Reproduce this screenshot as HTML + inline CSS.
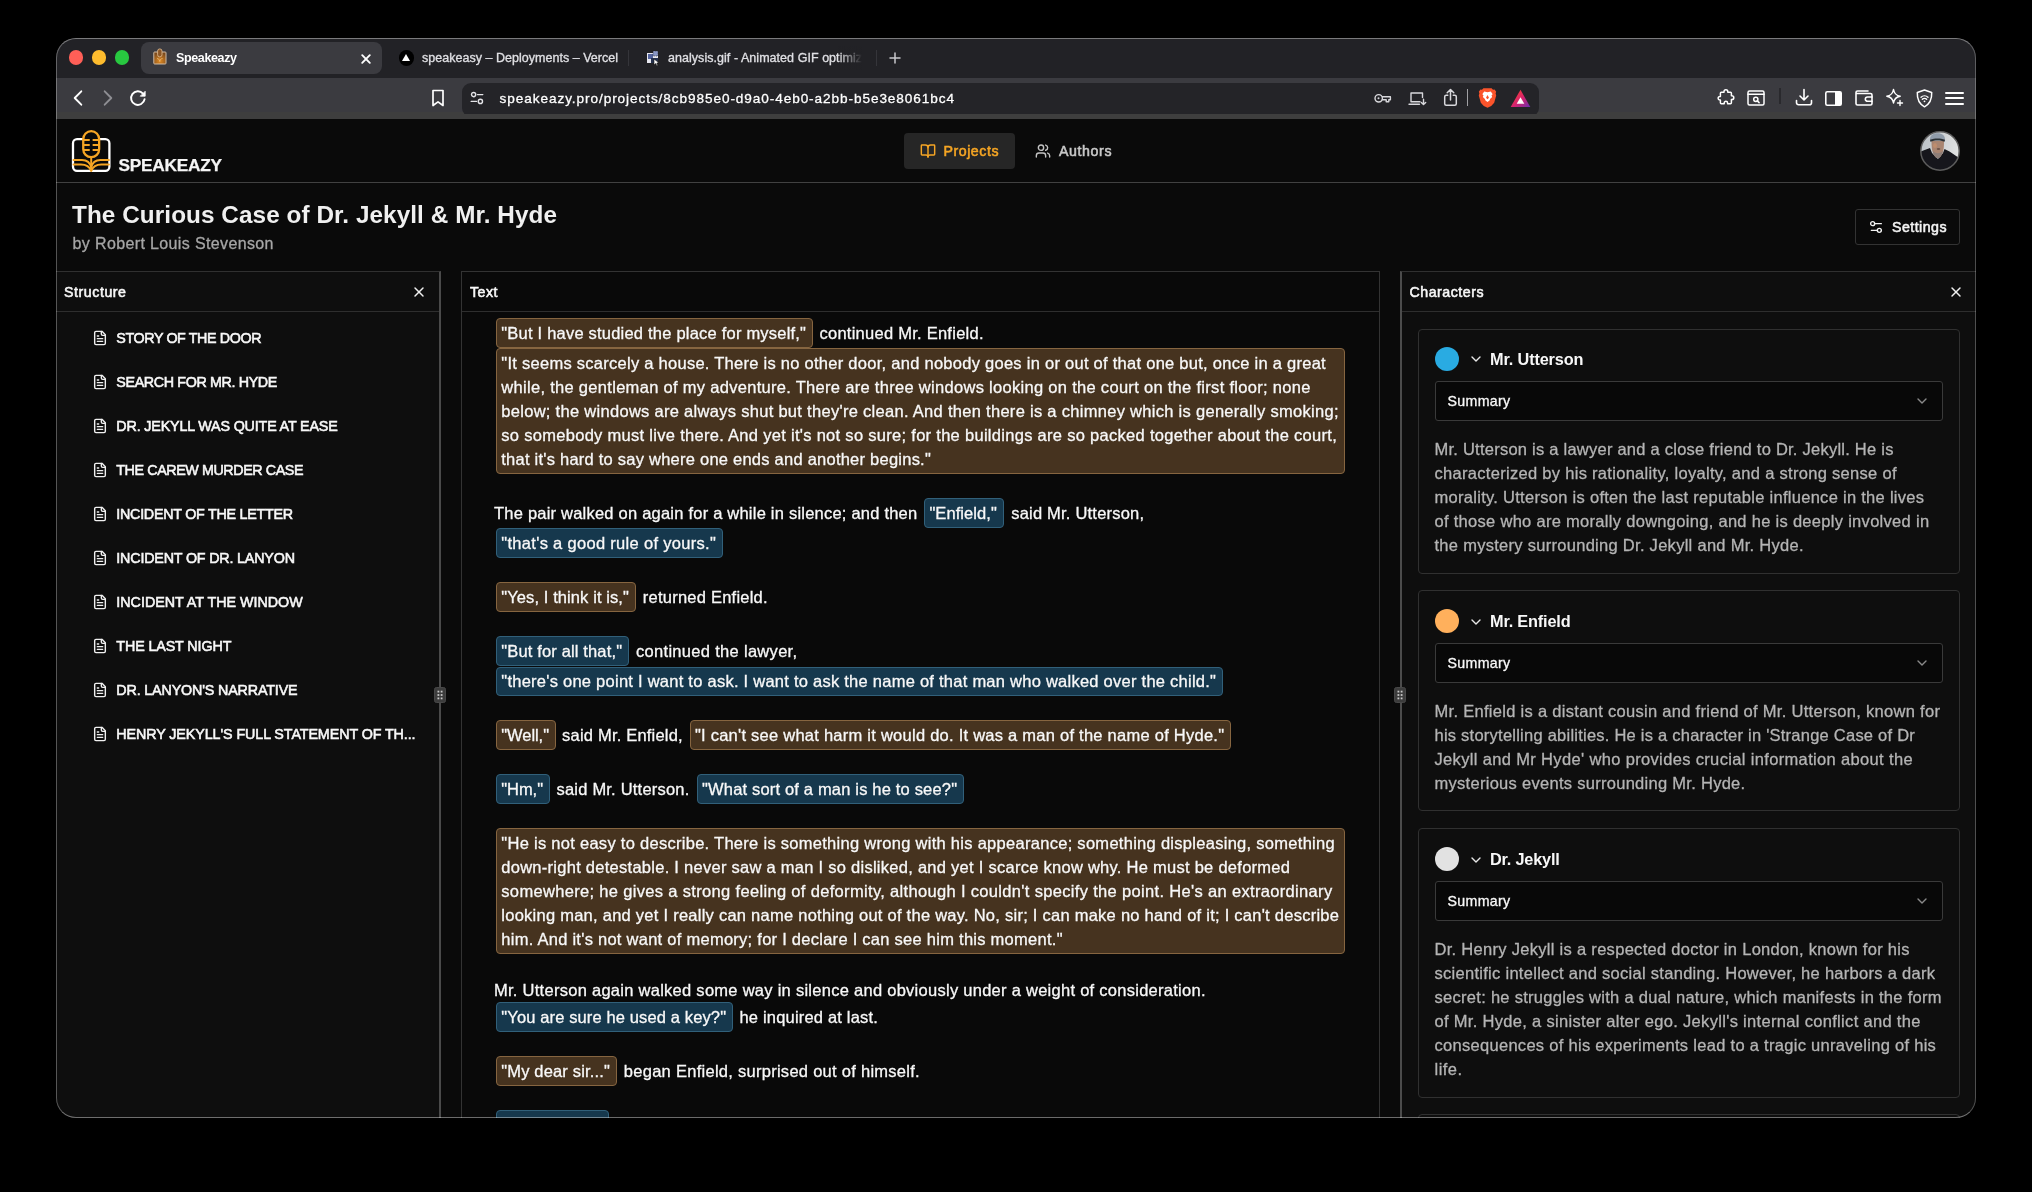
<!DOCTYPE html>
<html><head><meta charset="utf-8"><title>Speakeazy</title>
<style>
*{box-sizing:border-box;margin:0;padding:0}
html,body{width:2032px;height:1192px;overflow:hidden;background:#000;font-family:"Liberation Sans",sans-serif}
.a{position:absolute}
.t{position:absolute;white-space:pre}
#win{position:absolute;left:56px;top:38px;width:1920px;height:1080px;border-radius:20px;overflow:hidden;background:#0a0a0a}
#in{position:absolute;left:-56px;top:-38px;width:2032px;height:1192px}
#tx{position:absolute;left:0;top:0;width:2032px;height:1192px;will-change:transform}
#winb{position:absolute;left:56px;top:38px;width:1920px;height:1080px;border-radius:20px;border:1px solid;border-color:rgba(255,255,255,.4) rgba(255,255,255,.27) rgba(255,255,255,.4) rgba(255,255,255,.3);pointer-events:none}
.hb{position:absolute;border:1px solid;border-radius:4px}
.br{background:#46331f;border-color:#866540}
.bl{background:#16384d;border-color:#31607a}
svg{position:absolute;overflow:visible}
.ic{fill:none;stroke-linecap:round;stroke-linejoin:round}
.pnl{position:absolute;background:#0e0e0e}
.ln{position:absolute;background:#2e2e2e}
.card{position:absolute;left:1417.5px;width:542.5px;border:1px solid #303030;border-radius:4px;background:#0e0e0e}
.sel{position:absolute;left:1435px;width:508px;height:40px;border:1px solid #3a3a3a;border-radius:3px;background:#080808}
.dot{position:absolute;left:1435px;width:24px;height:24px;border-radius:50%}
</style></head><body>
<div id="win"><div id="in">
<!-- tab bar -->
<div class="a" style="left:56px;top:38px;width:1920px;height:40px;background:#222226"></div>
<div class="a" style="left:56px;top:78px;width:1920px;height:35px;background:#3b3b40"></div>
<!-- traffic lights -->
<div class="a" style="left:68.6px;top:50.2px;width:14.8px;height:14.8px;border-radius:50%;background:#ff5f57"></div>
<div class="a" style="left:91.6px;top:50.2px;width:14.8px;height:14.8px;border-radius:50%;background:#febc2e"></div>
<div class="a" style="left:114.6px;top:50.2px;width:14.8px;height:14.8px;border-radius:50%;background:#28c840"></div>
<!-- active tab -->
<div class="a" style="left:140.5px;top:42px;width:241.5px;height:32px;border-radius:8px;background:#3b3b40"></div>
<!-- favicon speakeazy -->
<svg style="left:153px;top:48px" width="14" height="17" viewBox="0 0 14 17"><defs><radialGradient id="fav" cx=".5" cy=".75" r=".7"><stop offset="0" stop-color="#e08a22"/><stop offset="1" stop-color="#7a4a1e"/></radialGradient></defs><rect x=".8" y="4" width="12.200" height="12" rx=".8" fill="url(#fav)" stroke="#dcc8b2" stroke-width=".9"/><rect x="4.600" y=".9" width="4.400" height="8" rx="2.200" fill="#8a5524" stroke="#d9b48a" stroke-width=".9"/><path d="M4 10.500c1.500 0 2.500 1 2.800 3 .3-2 1.300-3 2.800-3" fill="none" stroke="#f0c890" stroke-width=".8" opacity=".8"/></svg>
<!-- tab close -->
<svg class="ic" style="left:361px;top:53.5px" width="10" height="10" viewBox="0 0 10 10" stroke="#fff" stroke-width="1.9"><path d="M1.2 1.2 8.8 8.8M8.8 1.2 1.2 8.8"/></svg>
<!-- vercel favicon -->
<div class="a" style="left:398.5px;top:50px;width:15.5px;height:15.5px;border-radius:50%;background:#000"></div>
<svg style="left:402.2px;top:53.8px" width="8" height="7" viewBox="0 0 8 7"><path d="M4 0 8 7H0Z" fill="#fff"/></svg>
<div class="a" style="left:628px;top:50px;width:1px;height:16px;background:#35353a"></div>
<!-- gif favicon -->
<svg style="left:645px;top:49px" width="16" height="17" viewBox="0 0 16 17"><rect x="2" y="4" width="11" height="10" fill="#e8e8f0"/><rect x="3" y="5" width="5" height="5" fill="#52629c"/><rect x="8" y="2" width="5" height="5" fill="#8896c4" stroke="#222" stroke-width=".6" stroke-dasharray="1.2 1"/><rect x="6" y="9" width="7" height="5" fill="#26324f"/><path d="M9 10v6l1.7-1.5 1.2 2.2 1-.5-1.1-2.2 2.2-.2Z" fill="#fff" stroke="#111" stroke-width=".6"/></svg>
<div class="a" style="left:876px;top:50px;width:1px;height:16px;background:#35353a"></div>
<svg class="ic" style="left:889px;top:52px" width="12" height="12" viewBox="0 0 12 12" stroke="#c8c8cc" stroke-width="1.5"><path d="M6 1v10M1 6h10"/></svg>
<!-- nav icons -->
<svg class="ic" style="left:72px;top:89px" width="12" height="18" viewBox="0 0 12 18" stroke="#fff" stroke-width="1.9"><path d="M9.300 2.300 2.700 9l6.600 6.700"/></svg>
<svg class="ic" style="left:102px;top:89px" width="12" height="18" viewBox="0 0 12 18" stroke="#8e8e93" stroke-width="1.9"><path d="M2.700 2.300 9.300 9l-6.600 6.700"/></svg>
<svg class="ic" style="left:128px;top:88px" width="20" height="20" viewBox="0 0 20 20" stroke="#fff" stroke-width="1.9"><path d="M16.600 11.200a6.800 6.800 0 1 1-1.600-5.600"/><path d="M17.200 3.600v4.600h-4.600Z" fill="#fff" stroke-width=".8"/></svg>
<!-- bookmark -->
<svg class="ic" style="left:431px;top:89px" width="14" height="18" viewBox="0 0 14 18" stroke="#fff" stroke-width="1.7"><path d="M2 1.5h10v15l-5-3.6-5 3.6Z"/></svg>
<!-- url bar -->
<div class="a" style="left:56px;top:112.4px;width:1920px;height:6.6px;background:#3e3e3e"></div>
<div class="a" style="left:462px;top:82.7px;width:1077px;height:34px;border-radius:9px;background:#242428"></div>
<div class="a" style="left:56px;top:113.8px;width:1920px;height:5.2px;background:#3e3e3e"></div>
<svg class="ic" style="left:470px;top:91px" width="14" height="14" viewBox="0 0 14 14" stroke="#e4e4e8" stroke-width="1.4"><circle cx="3.6" cy="3.6" r="2.1"/><path d="M7.5 3.6h5.3"/><circle cx="10.4" cy="10.4" r="2.1"/><path d="M1.2 10.4h5.3"/></svg>
<!-- url right icons -->
<svg class="ic" style="left:1374px;top:92px" width="18" height="13" viewBox="0 0 18 13" stroke="#d8d8dc" stroke-width="1.4"><circle cx="4.7" cy="6.3" r="3.7"/><circle cx="4.5" cy="6.3" r="1" fill="#d8d8dc" stroke="none"/><path d="M8.4 4.8h8v3h-1.6v2h-2.6v-2H8.4"/></svg>
<svg class="ic" style="left:1408px;top:91px" width="19" height="15" viewBox="0 0 19 15" stroke="#d8d8dc" stroke-width="1.4"><path d="M12 10.8H3V2h11.5v4.5"/><path d="M1 13.3h10.5"/><path d="M15.5 8.2v5M13.3 11.4l2.2 2.2 2.2-2.2"/></svg>
<svg class="ic" style="left:1443px;top:88px" width="15" height="19" viewBox="0 0 15 19" stroke="#d8d8dc" stroke-width="1.5"><path d="M7.5 12V1.8M4.2 4.8 7.5 1.5l3.3 3.3"/><path d="M4.8 7.2H3.2a1.5 1.5 0 0 0-1.5 1.5v7.1a1.5 1.5 0 0 0 1.5 1.5h8.6a1.5 1.5 0 0 0 1.5-1.5V8.7a1.5 1.5 0 0 0-1.5-1.5h-1.6"/></svg>
<div class="a" style="left:1466.5px;top:89px;width:1.5px;height:17px;background:#a0a0a4"></div>
<!-- brave lion -->
<svg style="left:1478px;top:87.2px" width="19" height="21" viewBox="0 0 19 21"><path d="M13.6 1.2 15 2.8l1.6-.3 1.6 2.2-.6 1.6.6 2.2-2 7.2-3 3.2-3.7 1.8-3.700-1.8-3-3.200-2-7.200.6-2.200-.6-1.600 1.600-2.200 1.600.3 1.400-1.600Z" fill="#fb542b"/><path d="M9.500 5.200 12.800 4.600 14.700 7.200 13.500 8.300 14.200 10 12.300 11.700 11.500 13.400 9.500 15 7.500 13.400 6.700 11.700 4.800 10 5.500 8.300 4.300 7.200 6.200 4.600Z" fill="#fff"/><path d="M9.500 8 11 10.800 9.500 12.200 8 10.800Z" fill="#fb542b"/></svg>
<!-- BAT -->
<svg style="left:1510px;top:89px" width="21" height="19" viewBox="0 0 21 19"><defs><linearGradient id="bat" x1="0" y1="0" x2="1" y2="1"><stop offset="0" stop-color="#ff4724"/><stop offset=".55" stop-color="#d6226e"/><stop offset="1" stop-color="#6a2fb0"/></linearGradient></defs><path d="M10.500.8 20.300 18H.7Z" fill="url(#bat)"/><path d="M10.500 8.300 14.300 14.800H6.700Z" fill="#fff"/></svg>
<!-- right toolbar icons -->
<svg class="ic" style="left:1717px;top:88px" width="18" height="18" viewBox="0 0 18 18" stroke="#fff" stroke-width="1.5"><path d="M7 3.700a1.900 1.900 0 1 1 3.800 0v.6h2.700a.9.900 0 0 1 .9.900v2.600h.5a1.900 1.900 0 1 1 0 3.800h-.5v3.200a.9.900 0 0 1-.9.900h-2.900v-.7a1.700 1.700 0 1 0-3.400 0v.7H4.300a.9.900 0 0 1-.9-.9v-2.900h-.6a1.700 1.700 0 1 1 0-3.400h.6V5.200a.9.900 0 0 1 .9-.9H7Z"/></svg>
<svg class="ic" style="left:1747px;top:90px" width="18" height="16" viewBox="0 0 18 16" stroke="#fff" stroke-width="1.5"><rect x="1" y="1" width="16" height="14" rx="1.500"/><path d="M1 4.300h16"/><circle cx="8.800" cy="9.300" r="2.100"/><path d="m10.400 10.900 1.700 1.700"/></svg>
<div class="a" style="left:1779px;top:88px;width:1.5px;height:16px;background:#29292d"></div>
<svg class="ic" style="left:1795px;top:88px" width="18" height="18" viewBox="0 0 18 18" stroke="#fff" stroke-width="1.6"><path d="M9 1.500v10M5 8l4 4 4-4"/><path d="M1.500 12.500v2.200a2 2 0 0 0 2 2h11a2 2 0 0 0 2-2v-2.200"/></svg>
<svg style="left:1825px;top:90.500px" width="17" height="15" viewBox="0 0 17 15"><rect x=".8" y=".8" width="15.400" height="13.400" rx="1.500" fill="none" stroke="#fff" stroke-width="1.600"/><rect x="10" y=".8" width="6.200" height="13.400" fill="#fff"/></svg>
<svg class="ic" style="left:1855px;top:90px" width="18" height="16" viewBox="0 0 18 16" stroke="#fff" stroke-width="1.600"><path d="M1 3.500h14.500a1.500 1.500 0 0 1 1.500 1.500v8.500a1.500 1.500 0 0 1-1.500 1.500H2.500A1.500 1.500 0 0 1 1 13.500V2.500A1.500 1.500 0 0 1 2.500 1H13"/><path d="M17 7h-4.500a2 2 0 0 0 0 4.300H17"/></svg>
<svg class="ic" style="left:1885px;top:88px" width="19" height="19" viewBox="0 0 19 19" stroke="#fff" stroke-width="1.500"><path d="M8.500 1.500c.7 4.300 2.300 6 6.700 6.700-4.400.7-6 2.400-6.700 6.800-.7-4.400-2.300-6.100-6.700-6.800 4.400-.7 6-2.400 6.700-6.700Z"/><path d="M15 12.500v5M12.500 15h5" stroke-width="1.400"/></svg>
<svg class="ic" style="left:1916px;top:89px" width="17" height="19" viewBox="0 0 17 19" stroke="#fff" stroke-width="1.500"><path d="M8.500 1 15.700 3.500c.3 6.500-1.700 11.300-7.200 14.300C3 14.800 1 10 1.300 3.500Z"/><path d="M5 8.300a5 5 0 0 1 7 0M6.300 10.300a3.100 3.100 0 0 1 4.400 0" stroke-width="1.300"/><circle cx="8.500" cy="12.300" r=".9" fill="#fff" stroke="none"/></svg>
<div class="a" style="left:1944.500px;top:91.500px;width:19.500px;height:2px;border-radius:1px;background:#fff"></div>
<div class="a" style="left:1944.500px;top:97px;width:19.500px;height:2px;border-radius:1px;background:#fff"></div>
<div class="a" style="left:1944.500px;top:102.700px;width:19.500px;height:2px;border-radius:1px;background:#fff"></div>

<!-- ====== page ====== -->
<div class="a" style="left:56px;top:119px;width:1920px;height:1000px;background:#0a0a0a"></div>
<!-- logo -->
<svg class="ic" style="left:71px;top:129px" width="42" height="45" viewBox="0 0 42 45">
<path d="M12.2 10.15H6a4 4 0 0 0-4 4v23.7a4 4 0 0 0 4 4h28.400a4 4 0 0 0 4-4V14.150a4 4 0 0 0-4-4h-6.200" stroke="#fff" stroke-width="2.300"/>
<rect x="12.250" y="2.150" width="15.900" height="26" rx="7.950" stroke="#f5a524" stroke-width="2.300"/>
<path d="M13 11h5M22.400 11h5M13 16h5M22.400 16h5M13 21h5M22.400 21h5" stroke="#f5a524" stroke-width="2"/>
<path d="M20.200 28.500v13" stroke="#f5a524" stroke-width="2"/>
<path d="M2.500 31h8.500c5 0 8.200 3 9.200 7.500 1-4.500 4.200-7.500 9.200-7.500h8.500" stroke="#f5a524" stroke-width="2"/>
<path d="M2.500 35.500h7.500c5 0 8.700 2.500 10.200 6.500 1.500-4 5.200-6.500 10.200-6.500h7.500" stroke="#f5a524" stroke-width="2"/>
</svg>
<!-- nav -->
<div class="a" style="left:904px;top:133px;width:111px;height:36px;border-radius:4px;background:#262626"></div>
<svg class="ic" style="left:920px;top:143px" width="16" height="16" viewBox="0 0 24 24" stroke="#f5a524" stroke-width="2.200"><path d="M12 7v14"/><path d="M3 18a1 1 0 0 1-1-1V4a1 1 0 0 1 1-1h5a4 4 0 0 1 4 4 4 4 0 0 1 4-4h5a1 1 0 0 1 1 1v13a1 1 0 0 1-1 1h-6a3 3 0 0 0-3 3 3 3 0 0 0-3-3z"/></svg>
<svg class="ic" style="left:1035px;top:143px" width="16" height="16" viewBox="0 0 24 24" stroke="#c4c4c4" stroke-width="2.100"><path d="M16 21v-2a4 4 0 0 0-4-4H6a4 4 0 0 0-4 4v2"/><circle cx="9" cy="7" r="4"/><path d="M22 21v-2a4 4 0 0 0-3-3.870"/><path d="M16 3.130a4 4 0 0 1 0 7.750"/></svg>
<!-- avatar -->
<svg style="left:1920px;top:131px" width="40" height="40" viewBox="0 0 40 40">
<defs><clipPath id="avc"><circle cx="20" cy="20" r="19.300"/></clipPath><filter id="avb" x="-20%" y="-20%" width="140%" height="140%"><feGaussianBlur stdDeviation=".75"/></filter>
<linearGradient id="avbg" x1="0" y1="0" x2="1" y2=".2"><stop offset="0" stop-color="#b9c0c6"/><stop offset=".45" stop-color="#c9cdd0"/><stop offset="1" stop-color="#e2e3e3"/></linearGradient></defs>
<g clip-path="url(#avc)"><g filter="url(#avb)">
<rect x="-2" y="-2" width="44" height="44" fill="url(#avbg)"/>
<path d="M-3 44V22.500l5-2.500 8-3 2 5 6 6 5-6 1.500-4 5 2.500 11 7.500V44Z" fill="#14161a"/>
<path d="M11.500 10c0 5 .3 9 1.500 12 1.200 3 3 5 4.800 5s3.600-2 4.800-5c1.200-3 1.400-7 1.400-12Z" fill="#a98571"/>
<path d="M12.800 20c.8 4.200 2.800 7.200 5 7.200s4.200-3 5-7.200c-1.600 1.600-3.300 2.200-5 2.200s-3.400-.6-5-2.200Z" fill="#8c7d78"/>
<path d="M10 9.500C9.600 4.500 13 2.200 17.500 2.200s8 2.300 7.500 7.300c-2.500-.8-5-1.200-7.500-1.200s-5 .4-7.500 1.200Z" fill="#909caa"/>
<path d="M10 8.800c2.500-1 5-1.400 7.500-1.400s5 .4 7.500 1.400l-.4 2c-2.400-.9-4.700-1.200-7.100-1.200s-4.700.3-7.100 1.200Z" fill="#2c3036"/>
<ellipse cx="15" cy="14.500" rx="2" ry="2.500" fill="#c8906c" opacity=".7"/>
<ellipse cx="18.500" cy="18" rx="1.800" ry="1.100" fill="#6e5348"/>
</g></g>
<circle cx="20" cy="20" r="19.200" fill="none" stroke="#5c5c5c" stroke-width="1.500"/>
</svg>
<div class="ln" style="left:56px;top:182px;width:1920px;height:1px;background:#414141"></div>
<!-- settings btn -->
<div class="a" style="left:1855px;top:209px;width:105px;height:36px;border:1px solid #333;border-radius:3px;background:#0a0a0a"></div>
<svg class="ic" style="left:1868px;top:219px" width="16" height="16" viewBox="0 0 24 24" stroke="#f2f2f2" stroke-width="2.100"><path d="M20 7h-9"/><path d="M14 17H5"/><circle cx="17" cy="17" r="3"/><circle cx="7" cy="7" r="3"/></svg>

<!-- panels -->
<div class="pnl" style="left:56px;top:271px;width:385px;height:860px;border-top:1px solid #303030;border-right:2px solid #4a4a4a"></div>
<div class="ln" style="left:56px;top:310.500px;width:383px;height:1px"></div>
<div class="pnl" style="left:461px;top:271px;width:919px;height:860px;border:1px solid #333;background:#090909"></div>
<div class="ln" style="left:462px;top:310.500px;width:917px;height:1px"></div>
<div class="pnl" style="left:1400px;top:271px;width:580px;height:860px;border-top:1px solid #303030;border-left:2px solid #4c4c4c"></div>
<div class="ln" style="left:1402px;top:310.500px;width:578px;height:1px"></div>
<!-- close icons -->
<svg class="ic" style="left:411px;top:284px" width="16" height="16" viewBox="0 0 24 24" stroke="#f0f0f0" stroke-width="2.200"><path d="M18 6 6 18"/><path d="m6 6 12 12"/></svg>
<svg class="ic" style="left:1948px;top:284px" width="16" height="16" viewBox="0 0 24 24" stroke="#f0f0f0" stroke-width="2.200"><path d="M18 6 6 18"/><path d="m6 6 12 12"/></svg>
<!-- resize handles -->
<div class="a" style="left:434px;top:687px;width:12px;height:16px;border-radius:2.5px;background:#3c3c3c;border:1px solid #484848"></div>
<svg style="left:437px;top:690px" width="6" height="10" viewBox="0 0 6 10" fill="#c8c8c8"><rect x=".5" y=".7" width="1.800" height="1.800"/><rect x="3.700" y=".7" width="1.800" height="1.800"/><rect x=".5" y="4.100" width="1.800" height="1.800"/><rect x="3.700" y="4.100" width="1.800" height="1.800"/><rect x=".5" y="7.500" width="1.800" height="1.800"/><rect x="3.700" y="7.500" width="1.800" height="1.800"/></svg>
<div class="a" style="left:1394px;top:687px;width:12px;height:16px;border-radius:2.5px;background:#3c3c3c;border:1px solid #484848"></div>
<svg style="left:1397px;top:690px" width="6" height="10" viewBox="0 0 6 10" fill="#c8c8c8"><rect x=".5" y=".7" width="1.800" height="1.800"/><rect x="3.700" y=".7" width="1.800" height="1.800"/><rect x=".5" y="4.100" width="1.800" height="1.800"/><rect x="3.700" y="4.100" width="1.800" height="1.800"/><rect x=".5" y="7.500" width="1.800" height="1.800"/><rect x="3.700" y="7.500" width="1.800" height="1.800"/></svg>
<svg class="ic" style="left:92px;top:330px" width="16" height="16" viewBox="0 0 24 24" stroke="#f0f0f0" stroke-width="2.1"><path d="M15 2H6a2 2 0 0 0-2 2v16a2 2 0 0 0 2 2h12a2 2 0 0 0 2-2V7Z"/><path d="M14 2v4a2 2 0 0 0 2 2h4"/><path d="M10 9H8"/><path d="M16 13H8"/><path d="M16 17H8"/></svg>
<svg class="ic" style="left:92px;top:374px" width="16" height="16" viewBox="0 0 24 24" stroke="#f0f0f0" stroke-width="2.1"><path d="M15 2H6a2 2 0 0 0-2 2v16a2 2 0 0 0 2 2h12a2 2 0 0 0 2-2V7Z"/><path d="M14 2v4a2 2 0 0 0 2 2h4"/><path d="M10 9H8"/><path d="M16 13H8"/><path d="M16 17H8"/></svg>
<svg class="ic" style="left:92px;top:418px" width="16" height="16" viewBox="0 0 24 24" stroke="#f0f0f0" stroke-width="2.1"><path d="M15 2H6a2 2 0 0 0-2 2v16a2 2 0 0 0 2 2h12a2 2 0 0 0 2-2V7Z"/><path d="M14 2v4a2 2 0 0 0 2 2h4"/><path d="M10 9H8"/><path d="M16 13H8"/><path d="M16 17H8"/></svg>
<svg class="ic" style="left:92px;top:462px" width="16" height="16" viewBox="0 0 24 24" stroke="#f0f0f0" stroke-width="2.1"><path d="M15 2H6a2 2 0 0 0-2 2v16a2 2 0 0 0 2 2h12a2 2 0 0 0 2-2V7Z"/><path d="M14 2v4a2 2 0 0 0 2 2h4"/><path d="M10 9H8"/><path d="M16 13H8"/><path d="M16 17H8"/></svg>
<svg class="ic" style="left:92px;top:506px" width="16" height="16" viewBox="0 0 24 24" stroke="#f0f0f0" stroke-width="2.1"><path d="M15 2H6a2 2 0 0 0-2 2v16a2 2 0 0 0 2 2h12a2 2 0 0 0 2-2V7Z"/><path d="M14 2v4a2 2 0 0 0 2 2h4"/><path d="M10 9H8"/><path d="M16 13H8"/><path d="M16 17H8"/></svg>
<svg class="ic" style="left:92px;top:550px" width="16" height="16" viewBox="0 0 24 24" stroke="#f0f0f0" stroke-width="2.1"><path d="M15 2H6a2 2 0 0 0-2 2v16a2 2 0 0 0 2 2h12a2 2 0 0 0 2-2V7Z"/><path d="M14 2v4a2 2 0 0 0 2 2h4"/><path d="M10 9H8"/><path d="M16 13H8"/><path d="M16 17H8"/></svg>
<svg class="ic" style="left:92px;top:594px" width="16" height="16" viewBox="0 0 24 24" stroke="#f0f0f0" stroke-width="2.1"><path d="M15 2H6a2 2 0 0 0-2 2v16a2 2 0 0 0 2 2h12a2 2 0 0 0 2-2V7Z"/><path d="M14 2v4a2 2 0 0 0 2 2h4"/><path d="M10 9H8"/><path d="M16 13H8"/><path d="M16 17H8"/></svg>
<svg class="ic" style="left:92px;top:638px" width="16" height="16" viewBox="0 0 24 24" stroke="#f0f0f0" stroke-width="2.1"><path d="M15 2H6a2 2 0 0 0-2 2v16a2 2 0 0 0 2 2h12a2 2 0 0 0 2-2V7Z"/><path d="M14 2v4a2 2 0 0 0 2 2h4"/><path d="M10 9H8"/><path d="M16 13H8"/><path d="M16 17H8"/></svg>
<svg class="ic" style="left:92px;top:682px" width="16" height="16" viewBox="0 0 24 24" stroke="#f0f0f0" stroke-width="2.1"><path d="M15 2H6a2 2 0 0 0-2 2v16a2 2 0 0 0 2 2h12a2 2 0 0 0 2-2V7Z"/><path d="M14 2v4a2 2 0 0 0 2 2h4"/><path d="M10 9H8"/><path d="M16 13H8"/><path d="M16 17H8"/></svg>
<svg class="ic" style="left:92px;top:726px" width="16" height="16" viewBox="0 0 24 24" stroke="#f0f0f0" stroke-width="2.1"><path d="M15 2H6a2 2 0 0 0-2 2v16a2 2 0 0 0 2 2h12a2 2 0 0 0 2-2V7Z"/><path d="M14 2v4a2 2 0 0 0 2 2h4"/><path d="M10 9H8"/><path d="M16 13H8"/><path d="M16 17H8"/></svg>
<!-- highlight boxes -->
<div class="hb br" style="left:496px;top:318px;width:316.8px;height:29.5px"></div>
<div class="hb br" style="left:496px;top:348.2px;width:848.6px;height:125.8px"></div>
<div class="hb bl" style="left:924px;top:498px;width:79.8px;height:29.6px"></div>
<div class="hb bl" style="left:496px;top:528px;width:226.8px;height:29.6px"></div>
<div class="hb br" style="left:496px;top:582px;width:139.9px;height:29.6px"></div>
<div class="hb bl" style="left:496px;top:636px;width:133px;height:30px"></div>
<div class="hb bl" style="left:496px;top:666.6px;width:726.9px;height:29.0px"></div>
<div class="hb br" style="left:496px;top:720px;width:60px;height:29.6px"></div>
<div class="hb br" style="left:689.6px;top:720px;width:541.4px;height:29.6px"></div>
<div class="hb bl" style="left:496px;top:774px;width:54px;height:29.6px"></div>
<div class="hb bl" style="left:696.7px;top:774px;width:267.3px;height:29.6px"></div>
<div class="hb br" style="left:496px;top:828px;width:848.6px;height:125.6px"></div>
<div class="hb bl" style="left:496px;top:1002px;width:237px;height:29.6px"></div>
<div class="hb br" style="left:496px;top:1056px;width:120.8px;height:29.6px"></div>
<div class="hb bl" style="left:496px;top:1110.2px;width:112.5px;height:30px"></div>
<!-- character cards -->
<div class="card" style="top:328.5px;height:245.5px"></div>
<div class="card" style="top:590px;height:221px"></div>
<div class="card" style="top:828px;height:270px"></div>
<div class="card" style="top:1114px;height:100px"></div>
<div class="dot" style="top:347.1px;background:#29abe2"></div>
<div class="dot" style="top:609.3px;background:#ffb05c"></div>
<div class="dot" style="top:847.3px;background:#e2e2e2"></div>
<div class="sel" style="top:381px"></div>
<div class="sel" style="top:642.8px"></div>
<div class="sel" style="top:880.8px"></div>
<svg class="ic" style="left:1467.500px;top:351.3px" width="16" height="16" viewBox="0 0 24 24" stroke="#e8e8e8" stroke-width="2.1"><path d="m6 9 6 6 6-6"/></svg>
<svg class="ic" style="left:1467.500px;top:613.5px" width="16" height="16" viewBox="0 0 24 24" stroke="#e8e8e8" stroke-width="2.1"><path d="m6 9 6 6 6-6"/></svg>
<svg class="ic" style="left:1467.500px;top:851.5px" width="16" height="16" viewBox="0 0 24 24" stroke="#e8e8e8" stroke-width="2.1"><path d="m6 9 6 6 6-6"/></svg>
<svg class="ic" style="left:1914px;top:393px" width="16" height="16" viewBox="0 0 24 24" stroke="#8a8a8a" stroke-width="2.1"><path d="m6 9 6 6 6-6"/></svg>
<svg class="ic" style="left:1914px;top:654.8px" width="16" height="16" viewBox="0 0 24 24" stroke="#8a8a8a" stroke-width="2.1"><path d="m6 9 6 6 6-6"/></svg>
<svg class="ic" style="left:1914px;top:892.8px" width="16" height="16" viewBox="0 0 24 24" stroke="#8a8a8a" stroke-width="2.1"><path d="m6 9 6 6 6-6"/></svg>
<div id="tx">
<div class="t" style="left:176.0px;top:50.00px;font-size:12.5px;line-height:16px;color:#ffffff;font-weight:700;letter-spacing:-0.367px;">Speakeazy</div>
<div class="t" style="left:422.0px;top:50.00px;font-size:12.5px;line-height:16px;color:#e0e0e4;-webkit-text-stroke:0.3px #e0e0e4;letter-spacing:0.024px;">speakeasy – Deployments – Vercel</div>
<div class="t" style="left:668.0px;top:50.00px;font-size:12.5px;line-height:16px;color:#e0e0e4;-webkit-text-stroke:0.3px #e0e0e4;letter-spacing:0.046px;">analysis.gif - Animated GIF optimiz</div>
<div class="t" style="left:499.6px;top:90.00px;font-size:13.6px;line-height:17px;color:#ffffff;-webkit-text-stroke:0.3px #ffffff;letter-spacing:0.920px;">speakeazy.pro/projects/8cb985e0-d9a0-4eb0-a2bb-b5e3e8061bc4</div>
<div class="t" style="left:118.5px;top:154.00px;font-size:17.3px;line-height:22px;color:#f5f5f5;font-weight:700;letter-spacing:-0.268px;-webkit-text-stroke:0.25px #f5f5f5;">SPEAKEAZY</div>
<div class="t" style="left:943.5px;top:142.00px;font-size:14.2px;line-height:18px;color:#f5a524;letter-spacing:0.536px;-webkit-text-stroke:0.55px #f5a524;">Projects</div>
<div class="t" style="left:1059.0px;top:142.00px;font-size:14.2px;line-height:18px;color:#c8c8c8;letter-spacing:0.599px;-webkit-text-stroke:0.55px #c8c8c8;">Authors</div>
<div class="t" style="left:72.0px;top:200.00px;font-size:24.3px;line-height:30px;color:#f0f0f0;font-weight:700;letter-spacing:0.074px;">The Curious Case of Dr. Jekyll &amp; Mr. Hyde</div>
<div class="t" style="left:72.5px;top:234.00px;font-size:16px;line-height:20px;color:#a6a6a6;-webkit-text-stroke:0.3px #a6a6a6;letter-spacing:0.370px;">by Robert Louis Stevenson</div>
<div class="t" style="left:1892.0px;top:218.00px;font-size:14.2px;line-height:18px;color:#f4f4f4;letter-spacing:0.462px;-webkit-text-stroke:0.55px #f4f4f4;">Settings</div>
<div class="t" style="left:64.0px;top:283.00px;font-size:14.2px;line-height:18px;color:#f8f8f8;letter-spacing:0.555px;-webkit-text-stroke:0.55px #f8f8f8;">Structure</div>
<div class="t" style="left:470.0px;top:283.00px;font-size:14.2px;line-height:18px;color:#f8f8f8;letter-spacing:0.490px;-webkit-text-stroke:0.55px #f8f8f8;">Text</div>
<div class="t" style="left:1409.5px;top:283.00px;font-size:14.2px;line-height:18px;color:#f8f8f8;letter-spacing:0.512px;-webkit-text-stroke:0.55px #f8f8f8;">Characters</div>
<div class="t" style="left:116.3px;top:329.00px;font-size:14.3px;line-height:18px;color:#f8f8f8;letter-spacing:-0.393px;-webkit-text-stroke:0.55px #f8f8f8;">STORY OF THE DOOR</div>
<div class="t" style="left:116.3px;top:373.00px;font-size:14.3px;line-height:18px;color:#f8f8f8;letter-spacing:-0.367px;-webkit-text-stroke:0.55px #f8f8f8;">SEARCH FOR MR. HYDE</div>
<div class="t" style="left:116.3px;top:417.00px;font-size:14.3px;line-height:18px;color:#f8f8f8;letter-spacing:-0.157px;-webkit-text-stroke:0.55px #f8f8f8;">DR. JEKYLL WAS QUITE AT EASE</div>
<div class="t" style="left:116.3px;top:461.00px;font-size:14.3px;line-height:18px;color:#f8f8f8;letter-spacing:-0.410px;-webkit-text-stroke:0.55px #f8f8f8;">THE CAREW MURDER CASE</div>
<div class="t" style="left:116.3px;top:505.00px;font-size:14.3px;line-height:18px;color:#f8f8f8;letter-spacing:-0.261px;-webkit-text-stroke:0.55px #f8f8f8;">INCIDENT OF THE LETTER</div>
<div class="t" style="left:116.3px;top:549.00px;font-size:14.3px;line-height:18px;color:#f8f8f8;letter-spacing:-0.179px;-webkit-text-stroke:0.55px #f8f8f8;">INCIDENT OF DR. LANYON</div>
<div class="t" style="left:116.3px;top:593.00px;font-size:14.3px;line-height:18px;color:#f8f8f8;-webkit-text-stroke:0.55px #f8f8f8;">INCIDENT AT THE WINDOW</div>
<div class="t" style="left:116.3px;top:637.00px;font-size:14.3px;line-height:18px;color:#f8f8f8;letter-spacing:-0.109px;-webkit-text-stroke:0.55px #f8f8f8;">THE LAST NIGHT</div>
<div class="t" style="left:116.3px;top:681.00px;font-size:14.3px;line-height:18px;color:#f8f8f8;letter-spacing:-0.147px;-webkit-text-stroke:0.55px #f8f8f8;">DR. LANYON&#x27;S NARRATIVE</div>
<div class="t" style="left:116.3px;top:725.00px;font-size:14.3px;line-height:18px;color:#f8f8f8;letter-spacing:-0.087px;-webkit-text-stroke:0.55px #f8f8f8;">HENRY JEKYLL&#x27;S FULL STATEMENT OF TH...</div>
<div class="t" style="left:501.3px;top:323.00px;font-size:16.5px;line-height:21px;color:#f8f8f8;-webkit-text-stroke:0.3px #f8f8f8;letter-spacing:0.211px;">&quot;But I have studied the place for myself,&quot;</div>
<div class="t" style="left:819.5px;top:323.00px;font-size:16.5px;line-height:21px;color:#f8f8f8;-webkit-text-stroke:0.3px #f8f8f8;letter-spacing:0.253px;">continued Mr. Enfield.</div>
<div class="t" style="left:501.3px;top:353.00px;font-size:16.5px;line-height:21px;color:#f8f8f8;-webkit-text-stroke:0.3px #f8f8f8;letter-spacing:0.267px;">&quot;It seems scarcely a house. There is no other door, and nobody goes in or out of that one but, once in a great</div>
<div class="t" style="left:501.3px;top:377.00px;font-size:16.5px;line-height:21px;color:#f8f8f8;-webkit-text-stroke:0.3px #f8f8f8;letter-spacing:0.298px;">while, the gentleman of my adventure. There are three windows looking on the court on the first floor; none</div>
<div class="t" style="left:501.3px;top:401.00px;font-size:16.5px;line-height:21px;color:#f8f8f8;-webkit-text-stroke:0.3px #f8f8f8;letter-spacing:0.292px;">below; the windows are always shut but they&#x27;re clean. And then there is a chimney which is generally smoking;</div>
<div class="t" style="left:501.3px;top:425.00px;font-size:16.5px;line-height:21px;color:#f8f8f8;-webkit-text-stroke:0.3px #f8f8f8;letter-spacing:0.293px;">so somebody must live there. And yet it&#x27;s not so sure; for the buildings are so packed together about the court,</div>
<div class="t" style="left:501.3px;top:449.00px;font-size:16.5px;line-height:21px;color:#f8f8f8;-webkit-text-stroke:0.3px #f8f8f8;letter-spacing:0.236px;">that it&#x27;s hard to say where one ends and another begins.&quot;</div>
<div class="t" style="left:494.0px;top:503.00px;font-size:16.5px;line-height:21px;color:#f8f8f8;-webkit-text-stroke:0.3px #f8f8f8;letter-spacing:0.219px;">The pair walked on again for a while in silence; and then</div>
<div class="t" style="left:929.4px;top:503.00px;font-size:16.5px;line-height:21px;color:#f8f8f8;-webkit-text-stroke:0.3px #f8f8f8;letter-spacing:0.072px;">&quot;Enfield,&quot;</div>
<div class="t" style="left:1011.2px;top:503.00px;font-size:16.5px;line-height:21px;color:#f8f8f8;-webkit-text-stroke:0.3px #f8f8f8;letter-spacing:0.212px;">said Mr. Utterson,</div>
<div class="t" style="left:501.3px;top:533.00px;font-size:16.5px;line-height:21px;color:#f8f8f8;-webkit-text-stroke:0.3px #f8f8f8;letter-spacing:0.305px;">&quot;that&#x27;s a good rule of yours.&quot;</div>
<div class="t" style="left:501.3px;top:587.00px;font-size:16.5px;line-height:21px;color:#f8f8f8;-webkit-text-stroke:0.3px #f8f8f8;letter-spacing:0.092px;">&quot;Yes, I think it is,&quot;</div>
<div class="t" style="left:642.8px;top:587.00px;font-size:16.5px;line-height:21px;color:#f8f8f8;-webkit-text-stroke:0.3px #f8f8f8;letter-spacing:0.233px;">returned Enfield.</div>
<div class="t" style="left:501.3px;top:641.00px;font-size:16.5px;line-height:21px;color:#f8f8f8;-webkit-text-stroke:0.3px #f8f8f8;letter-spacing:0.144px;">&quot;But for all that,&quot;</div>
<div class="t" style="left:636.0px;top:641.00px;font-size:16.5px;line-height:21px;color:#f8f8f8;-webkit-text-stroke:0.3px #f8f8f8;letter-spacing:0.303px;">continued the lawyer,</div>
<div class="t" style="left:501.3px;top:671.00px;font-size:16.5px;line-height:21px;color:#f8f8f8;-webkit-text-stroke:0.3px #f8f8f8;letter-spacing:0.251px;">&quot;there&#x27;s one point I want to ask. I want to ask the name of that man who walked over the child.&quot;</div>
<div class="t" style="left:501.3px;top:725.00px;font-size:16.5px;line-height:21px;color:#f8f8f8;-webkit-text-stroke:0.3px #f8f8f8;letter-spacing:-0.066px;">&quot;Well,&quot;</div>
<div class="t" style="left:562.1px;top:725.00px;font-size:16.5px;line-height:21px;color:#f8f8f8;-webkit-text-stroke:0.3px #f8f8f8;letter-spacing:0.201px;">said Mr. Enfield,</div>
<div class="t" style="left:694.9px;top:725.00px;font-size:16.5px;line-height:21px;color:#f8f8f8;-webkit-text-stroke:0.3px #f8f8f8;letter-spacing:0.249px;">&quot;I can&#x27;t see what harm it would do. It was a man of the name of Hyde.&quot;</div>
<div class="t" style="left:501.3px;top:779.00px;font-size:16.5px;line-height:21px;color:#f8f8f8;-webkit-text-stroke:0.3px #f8f8f8;letter-spacing:-0.067px;">&quot;Hm,&quot;</div>
<div class="t" style="left:556.5px;top:779.00px;font-size:16.5px;line-height:21px;color:#f8f8f8;-webkit-text-stroke:0.3px #f8f8f8;letter-spacing:0.206px;">said Mr. Utterson.</div>
<div class="t" style="left:702.0px;top:779.00px;font-size:16.5px;line-height:21px;color:#f8f8f8;-webkit-text-stroke:0.3px #f8f8f8;letter-spacing:0.174px;">&quot;What sort of a man is he to see?&quot;</div>
<div class="t" style="left:501.3px;top:833.00px;font-size:16.5px;line-height:21px;color:#f8f8f8;-webkit-text-stroke:0.3px #f8f8f8;letter-spacing:0.282px;">&quot;He is not easy to describe. There is something wrong with his appearance; something displeasing, something</div>
<div class="t" style="left:501.3px;top:857.00px;font-size:16.5px;line-height:21px;color:#f8f8f8;-webkit-text-stroke:0.3px #f8f8f8;letter-spacing:0.266px;">down-right detestable. I never saw a man I so disliked, and yet I scarce know why. He must be deformed</div>
<div class="t" style="left:501.3px;top:881.00px;font-size:16.5px;line-height:21px;color:#f8f8f8;-webkit-text-stroke:0.3px #f8f8f8;letter-spacing:0.328px;">somewhere; he gives a strong feeling of deformity, although I couldn&#x27;t specify the point. He&#x27;s an extraordinary</div>
<div class="t" style="left:501.3px;top:905.00px;font-size:16.5px;line-height:21px;color:#f8f8f8;-webkit-text-stroke:0.3px #f8f8f8;letter-spacing:0.253px;">looking man, and yet I really can name nothing out of the way. No, sir; I can make no hand of it; I can&#x27;t describe</div>
<div class="t" style="left:501.3px;top:929.00px;font-size:16.5px;line-height:21px;color:#f8f8f8;-webkit-text-stroke:0.3px #f8f8f8;letter-spacing:0.262px;">him. And it&#x27;s not want of memory; for I declare I can see him this moment.&quot;</div>
<div class="t" style="left:494.0px;top:980.00px;font-size:16.5px;line-height:21px;color:#f8f8f8;-webkit-text-stroke:0.3px #f8f8f8;letter-spacing:0.270px;">Mr. Utterson again walked some way in silence and obviously under a weight of consideration.</div>
<div class="t" style="left:501.3px;top:1007.00px;font-size:16.5px;line-height:21px;color:#f8f8f8;-webkit-text-stroke:0.3px #f8f8f8;letter-spacing:0.126px;">&quot;You are sure he used a key?&quot;</div>
<div class="t" style="left:739.5px;top:1007.00px;font-size:16.5px;line-height:21px;color:#f8f8f8;-webkit-text-stroke:0.3px #f8f8f8;letter-spacing:0.182px;">he inquired at last.</div>
<div class="t" style="left:501.3px;top:1061.00px;font-size:16.5px;line-height:21px;color:#f8f8f8;-webkit-text-stroke:0.3px #f8f8f8;letter-spacing:0.156px;">&quot;My dear sir...&quot;</div>
<div class="t" style="left:623.8px;top:1061.00px;font-size:16.5px;line-height:21px;color:#f8f8f8;-webkit-text-stroke:0.3px #f8f8f8;letter-spacing:0.273px;">began Enfield, surprised out of himself.</div>
<div class="t" style="left:1490.0px;top:349.00px;font-size:16.3px;line-height:20px;color:#f8f8f8;font-weight:700;letter-spacing:-0.135px;">Mr. Utterson</div>
<div class="t" style="left:1447.5px;top:392.00px;font-size:14.2px;line-height:18px;color:#f8f8f8;-webkit-text-stroke:0.3px #f8f8f8;letter-spacing:0.333px;">Summary</div>
<div class="t" style="left:1434.5px;top:439.00px;font-size:16.5px;line-height:21px;color:#b4b4b4;-webkit-text-stroke:0.3px #b4b4b4;letter-spacing:0.239px;">Mr. Utterson is a lawyer and a close friend to Dr. Jekyll. He is</div>
<div class="t" style="left:1434.5px;top:463.00px;font-size:16.5px;line-height:21px;color:#b4b4b4;-webkit-text-stroke:0.3px #b4b4b4;letter-spacing:0.297px;">characterized by his rationality, loyalty, and a strong sense of</div>
<div class="t" style="left:1434.5px;top:487.00px;font-size:16.5px;line-height:21px;color:#b4b4b4;-webkit-text-stroke:0.3px #b4b4b4;letter-spacing:0.285px;">morality. Utterson is often the last reputable influence in the lives</div>
<div class="t" style="left:1434.5px;top:511.00px;font-size:16.5px;line-height:21px;color:#b4b4b4;-webkit-text-stroke:0.3px #b4b4b4;letter-spacing:0.294px;">of those who are morally downgoing, and he is deeply involved in</div>
<div class="t" style="left:1434.5px;top:535.00px;font-size:16.5px;line-height:21px;color:#b4b4b4;-webkit-text-stroke:0.3px #b4b4b4;letter-spacing:0.281px;">the mystery surrounding Dr. Jekyll and Mr. Hyde.</div>
<div class="t" style="left:1490.0px;top:611.00px;font-size:16.3px;line-height:20px;color:#f8f8f8;font-weight:700;letter-spacing:-0.173px;">Mr. Enfield</div>
<div class="t" style="left:1447.5px;top:654.00px;font-size:14.2px;line-height:18px;color:#f8f8f8;-webkit-text-stroke:0.3px #f8f8f8;letter-spacing:0.333px;">Summary</div>
<div class="t" style="left:1434.5px;top:701.00px;font-size:16.5px;line-height:21px;color:#b4b4b4;-webkit-text-stroke:0.3px #b4b4b4;letter-spacing:0.298px;">Mr. Enfield is a distant cousin and friend of Mr. Utterson, known for</div>
<div class="t" style="left:1434.5px;top:725.00px;font-size:16.5px;line-height:21px;color:#b4b4b4;-webkit-text-stroke:0.3px #b4b4b4;letter-spacing:0.237px;">his storytelling abilities. He is a character in &#x27;Strange Case of Dr</div>
<div class="t" style="left:1434.5px;top:749.00px;font-size:16.5px;line-height:21px;color:#b4b4b4;-webkit-text-stroke:0.3px #b4b4b4;letter-spacing:0.344px;">Jekyll and Mr Hyde&#x27; who provides crucial information about the</div>
<div class="t" style="left:1434.5px;top:773.00px;font-size:16.5px;line-height:21px;color:#b4b4b4;-webkit-text-stroke:0.3px #b4b4b4;letter-spacing:0.284px;">mysterious events surrounding Mr. Hyde.</div>
<div class="t" style="left:1490.0px;top:849.00px;font-size:16.3px;line-height:20px;color:#f8f8f8;font-weight:700;letter-spacing:-0.191px;">Dr. Jekyll</div>
<div class="t" style="left:1447.5px;top:892.00px;font-size:14.2px;line-height:18px;color:#f8f8f8;-webkit-text-stroke:0.3px #f8f8f8;letter-spacing:0.333px;">Summary</div>
<div class="t" style="left:1434.5px;top:939.00px;font-size:16.5px;line-height:21px;color:#b4b4b4;-webkit-text-stroke:0.3px #b4b4b4;letter-spacing:0.295px;">Dr. Henry Jekyll is a respected doctor in London, known for his</div>
<div class="t" style="left:1434.5px;top:963.00px;font-size:16.5px;line-height:21px;color:#b4b4b4;-webkit-text-stroke:0.3px #b4b4b4;letter-spacing:0.283px;">scientific intellect and social standing. However, he harbors a dark</div>
<div class="t" style="left:1434.5px;top:987.00px;font-size:16.5px;line-height:21px;color:#b4b4b4;-webkit-text-stroke:0.3px #b4b4b4;letter-spacing:0.285px;">secret: he struggles with a dual nature, which manifests in the form</div>
<div class="t" style="left:1434.5px;top:1011.00px;font-size:16.5px;line-height:21px;color:#b4b4b4;-webkit-text-stroke:0.3px #b4b4b4;letter-spacing:0.315px;">of Mr. Hyde, a sinister alter ego. Jekyll&#x27;s internal conflict and the</div>
<div class="t" style="left:1434.5px;top:1035.00px;font-size:16.5px;line-height:21px;color:#b4b4b4;-webkit-text-stroke:0.3px #b4b4b4;letter-spacing:0.291px;">consequences of his experiments lead to a tragic unraveling of his</div>
<div class="t" style="left:1434.5px;top:1059.00px;font-size:16.5px;line-height:21px;color:#b4b4b4;-webkit-text-stroke:0.3px #b4b4b4;letter-spacing:0.478px;">life.</div>
</div>
<div class="a" style="left:838px;top:46px;width:30px;height:24px;background:linear-gradient(90deg,rgba(34,34,38,0),#222226 80%)"></div>
</div></div>
<div id="winb"></div>
</body></html>
